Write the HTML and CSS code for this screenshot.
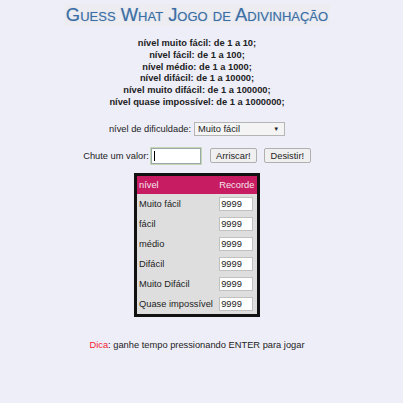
FILE: index.html
```html
<!DOCTYPE html>
<html>
<head>
<meta charset="utf-8">
<link rel="stylesheet" href="styles.css">
</head>
<body>
<div class="page">
  <h1 class="title">Guess What Jogo de Adivinhação</h1>
  <div class="levels">
    <p>nível muito fácil: de 1 a 10;</p>
    <p>nível fácil: de 1 a 100;</p>
    <p>nível médio: de 1 a 1000;</p>
    <p>nível difácil: de 1 a 10000;</p>
    <p>nível muito difácil: de 1 a 100000;</p>
    <p>nível quase impossível: de 1 a 1000000;</p>
  </div>
  <div class="row difficulty">
    <label>nível de dificuldade:</label>
    <div class="select"><span>Muito fácil</span><span class="arrow">▼</span></div>
  </div>
  <div class="row guess">
    <label>Chute um valor:</label>
    <div class="input"><span class="caret"></span></div>
    <button class="btn">Arriscar!</button>
    <button class="btn">Desistir!</button>
  </div>
  <table class="records">
    <thead>
      <tr><th>nível</th><th>Recorde</th></tr>
    </thead>
    <tbody>
      <tr><td>Muito fácil</td><td><span class="val">9999</span></td></tr>
      <tr><td>fácil</td><td><span class="val">9999</span></td></tr>
      <tr><td>médio</td><td><span class="val">9999</span></td></tr>
      <tr><td>Difácil</td><td><span class="val">9999</span></td></tr>
      <tr><td>Muito Difácil</td><td><span class="val">9999</span></td></tr>
      <tr><td>Quase impossível</td><td><span class="val">9999</span></td></tr>
    </tbody>
  </table>
  <p class="tip"><span class="tip-label">Dica</span>: ganhe tempo pressionando ENTER para jogar</p>
</div>
</body>
</html>
```

FILE: styles.css
```css
html, body {
  margin: 0;
  padding: 0;
  background: #eeeef9;
  font-family: "Liberation Sans", Arial, sans-serif;
  color: #222;
}
.page {
  display: flex;
  flex-direction: column;
  align-items: center;
  padding: 4px 9px 0 0;
}
.title {
  margin: 0;
  padding: 0 2px;
  background: #ececf1;
  font-size: 18.4px;
  font-weight: normal;
  font-variant: small-caps;
  color: #3b6ea5;
  line-height: 22px;
  text-shadow: 0 0 1px rgba(60,110,165,0.35);
}
.levels {
  margin-top: 12px;
  text-align: center;
  font-size: 9.3px;
  font-weight: bold;
  line-height: 11.8px;
}
.levels p { margin: 0; }
.row {
  display: flex;
  align-items: center;
  font-size: 9.3px;
}
.difficulty {
  margin-top: 13px;
  gap: 3px;
}
.select {
  width: 91px;
  height: 14px;
  box-sizing: border-box;
  border: 1px solid #b5b5b5;
  background: #f4f4f4;
  display: flex;
  align-items: center;
  justify-content: space-between;
  padding: 0 5px 0 3px;
  font-size: 9.3px;
}
.arrow { font-size: 6px; }
.guess {
  margin-top: 12px;
  gap: 2px;
}
.input {
  width: 50px;
  height: 16px;
  box-sizing: border-box;
  border: 1px solid #9aa;
  background: #fff;
  box-shadow: 0 0 0 1px #c6d6b6;
  display: flex;
  align-items: center;
  padding-left: 2px;
  margin-right: 7px;
}
.caret { width: 1px; height: 10px; background: #000; }
.btn {
  font-family: "Liberation Sans", Arial, sans-serif;
  font-size: 9.3px;
  height: 15px;
  min-width: 47px;
  padding: 0 5px;
  border: 1px solid #b0b0b0;
  border-radius: 2px;
  background: #f0f0f0;
  color: #222;
  margin-right: 5px;
}
.btn:last-child { margin-right: 0; }
.records {
  margin-top: 9px;
  border: 3px solid #111;
  border-collapse: collapse;
  background: #dedede;
  font-size: 9.3px;
  width: 126px;
  white-space: nowrap;
}
.records th {
  background: #c71c61;
  color: #f6e6ee;
  font-weight: normal;
  text-align: left;
  height: 18px;
  padding: 0 1px 0 2px;
}
.records td {
  height: 20px;
  padding: 0 1px 0 2px;
}
.val {
  display: inline-block;
  width: 31px;
  height: 12px;
  line-height: 12px;
  background: #fff;
  border: 1px solid #c0c0c0;
  padding-left: 1px;
}
.tip {
  margin: 23px 0 0;
  font-size: 9.3px;
}
.tip-label { color: #f02030; }
```
